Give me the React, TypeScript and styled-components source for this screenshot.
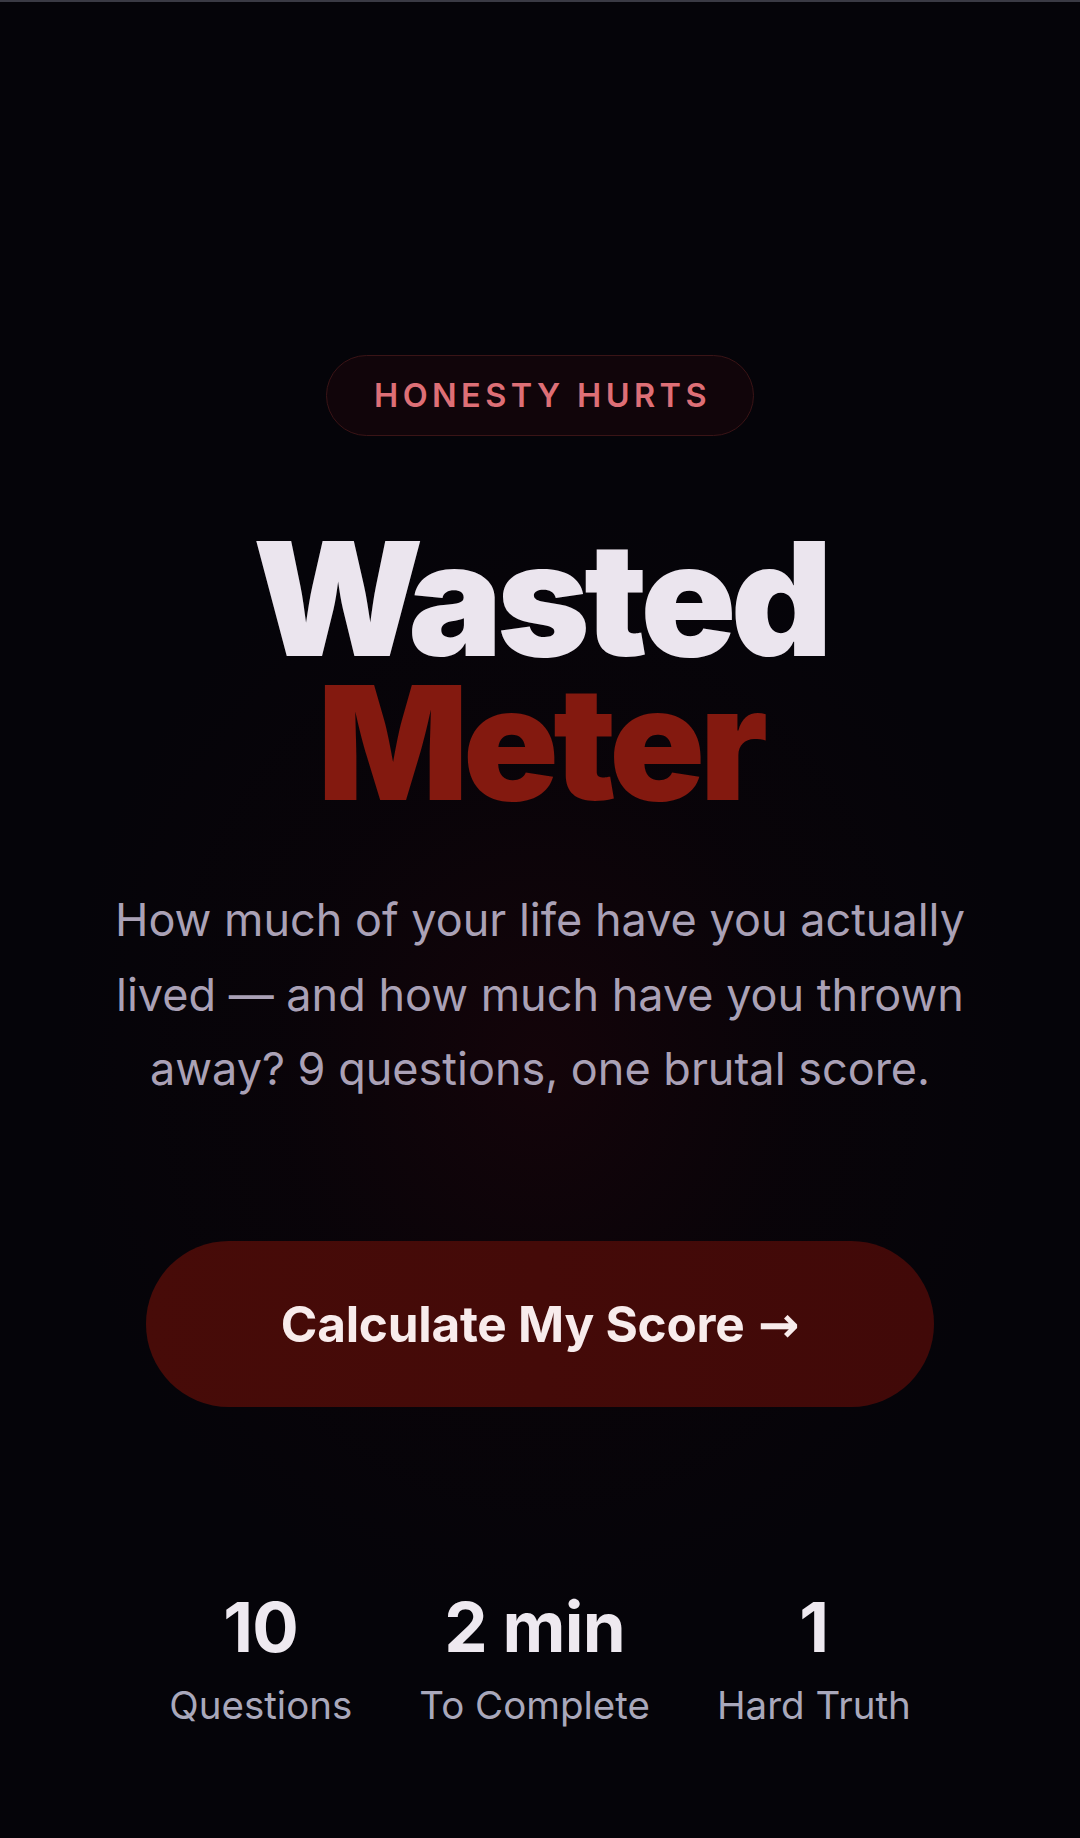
import React from "react";
import styled, { createGlobalStyle } from "styled-components";

const GlobalStyle = createGlobalStyle`
  html, body {
    margin: 0;
    padding: 0;
    background: #050409;
  }
  body {
    font-family: Inter, "Noto Sans", sans-serif;
    -webkit-font-smoothing: antialiased;
  }
`;

const Page = styled.div`
  min-height: 1838px;
  box-sizing: border-box;
  border-top: 2px solid #3a3a44;
  background:
    radial-gradient(ellipse 480px 560px at 50% 58%, rgba(34, 4, 10, 0.5) 0%, rgba(18, 3, 8, 0.28) 55%, rgba(5, 4, 9, 0) 100%),
    #050409;
  display: flex;
  flex-direction: column;
  align-items: center;
  padding-top: 353px;
`;

const Badge = styled.div`
  display: inline-flex;
  align-items: center;
  justify-content: center;
  height: 81px;
  box-sizing: border-box;
  padding: 0 42px 0 47px;
  border-radius: 999px;
  border: 1.5px solid #3a1416;
  background: #11050a;
  color: #de6f76;
  font-size: 32.5px;
  font-weight: 600;
  letter-spacing: 0.135em;
`;

const Title = styled.h1`
  margin: 91px 0 0;
  text-align: center;
  font-size: 158px;
  font-weight: 900;
  line-height: 144px;
  letter-spacing: -0.035em;
`;

const TitleLine = styled.span<{ $tone: "light" | "red" }>`
  display: block;
  color: ${({ $tone }) => ($tone === "light" ? "#ebe5ee" : "#83190f")};
`;

const Lead = styled.p`
  margin: 68px 0 0;
  width: 890px;
  text-align: center;
  font-size: 45px;
  line-height: 74.5px;
  color: #aaa1b6;
`;

const CtaButton = styled.button`
  margin-top: 134px;
  width: 788px;
  height: 166px;
  border: none;
  border-radius: 83px;
  background: linear-gradient(90deg, #470b08 0%, #410908 100%);
  color: #f8ecec;
  font-family: Inter, "Noto Sans", sans-serif;
  font-size: 49.5px;
  font-weight: 700;
  letter-spacing: -0.005em;
  cursor: pointer;
`;

const Arrow = styled.span`
  font-family: "DejaVu Sans", sans-serif;
  font-weight: 700;
  margin-left: 2px;
`;

const Stats = styled.div`
  margin-top: 180px;
  display: flex;
  gap: 67px;
  justify-content: center;
`;

const Stat = styled.div`
  display: flex;
  flex-direction: column;
  align-items: center;
  gap: 14px;
`;

const StatValue = styled.div`
  font-size: 69px;
  font-weight: 700;
  line-height: 80px;
  color: #eee9f0;
  letter-spacing: -0.01em;
`;

const StatLabel = styled.div`
  font-size: 38.5px;
  line-height: 48px;
  color: #a9a8bb;
`;

const stats = [
  { value: "10", label: "Questions" },
  { value: "2 min", label: "To Complete" },
  { value: "1", label: "Hard Truth" },
];

export default function App() {
  return (
    <>
      <GlobalStyle />
      <Page>
        <Badge>HONESTY HURTS</Badge>
        <Title>
          <TitleLine $tone="light">Wasted</TitleLine>
          <TitleLine $tone="red">Meter</TitleLine>
        </Title>
        <Lead>
          How much of your life have you actually lived — and how much have you
          thrown away? 9 questions, one brutal score.
        </Lead>
        <CtaButton>
          Calculate My Score <Arrow>→</Arrow>
        </CtaButton>
        <Stats>
          {stats.map((s) => (
            <Stat key={s.label}>
              <StatValue>{s.value}</StatValue>
              <StatLabel>{s.label}</StatLabel>
            </Stat>
          ))}
        </Stats>
      </Page>
    </>
  );
}
